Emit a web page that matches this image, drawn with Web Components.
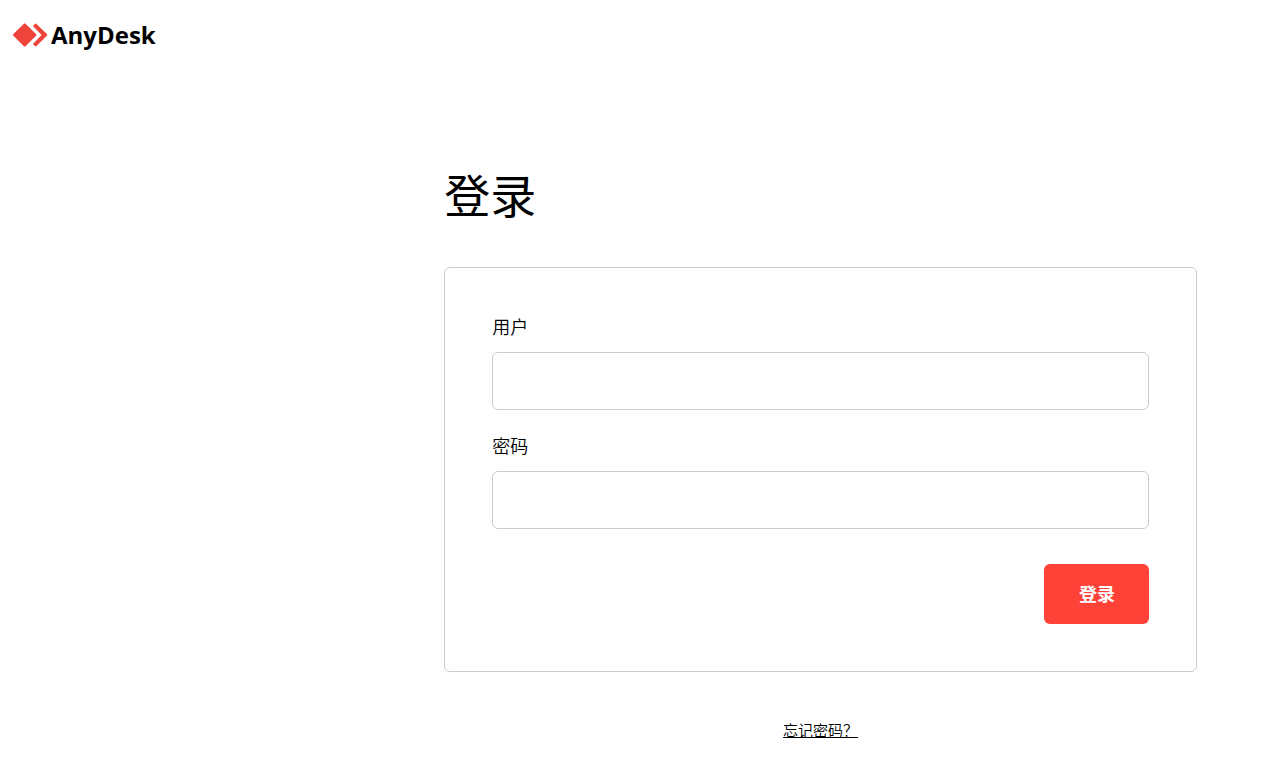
<!DOCTYPE html>
<html lang="zh-CN">
<head>
<meta charset="utf-8">
<meta name="viewport" content="width=device-width, initial-scale=1">
<title>AnyDesk</title>
<style>
  body {
    margin: 0;
    background: #fff;
    color: #000;
    font-family: "Noto Sans CJK SC", "Open Sans", sans-serif;
  }
</style>
</head>
<body>
<login-page>
  <brand-logo slot="header">AnyDesk</brand-logo>
  <login-form heading="登录"></login-form>
</login-page>

<script>
class BaseElement extends HTMLElement {
  connectedCallback() {
    if (this.shadowRoot) return;
    this.attachShadow({ mode: "open" }).innerHTML = this.render();
  }
}

class LoginPage extends BaseElement {
  render() {
    return `
      <style>
        :host { display: block; }
        header { padding: 16px 12px; }
        main {
          display: grid;
          grid-template-columns: 8fr 17fr;
          padding: 90px 90px 24px;
        }
        .content { grid-column: 2; min-width: 0; }
        @media (max-width: 800px) {
          main { grid-template-columns: 1fr; padding: 48px 24px; }
          .content { grid-column: 1; }
        }
      </style>
      <header><slot name="header"></slot></header>
      <main><div class="content"><slot></slot></div></main>`;
  }
}

class BrandLogo extends BaseElement {
  render() {
    return `
      <style>
        :host {
          display: flex;
          align-items: center;
          gap: 3px;
          font: 700 24px/38px "Open Sans", sans-serif;
        }
        svg { display: block; width: 36px; height: 24px; fill: #ef443b; }
      </style>
      <svg viewBox="0 0 36 24" aria-hidden="true">
        <path d="M11.9.7q.8-.8 1.6 0L24 11.1q.8.8 0 1.6L13.5 23.2q-.8.8-1.6 0L1.4 12.7q-.8-.8 0-1.6Z"/>
        <path d="M22.9.9q.8-.8 1.6 0L34.9 11.1q.8.8 0 1.6L24.5 23.1q-.8.8-1.6 0l-2-2L29.6 12 20.9 2.9Z"/>
      </svg>
      <span><slot></slot></span>`;
  }
}

class TextField extends BaseElement {
  render() {
    const type = this.getAttribute("type") || "text";
    return `
      <style>
        :host { display: flex; flex-direction: column; gap: 15px; }
        label { font-size: 18px; line-height: 22px; font-weight: 350; }
        input {
          box-sizing: border-box;
          width: 100%;
          height: 58px;
          padding: 0 16px;
          border: 1px solid #ccc;
          border-radius: 6px;
          background: #fff;
          color: inherit;
          font: inherit;
          font-size: 18px;
        }
      </style>
      <label for="field">${this.getAttribute("label")}</label>
      <input id="field" type="${type}" autocomplete="off">`;
  }
}

class PrimaryButton extends BaseElement {
  render() {
    return `
      <style>
        :host { display: block; }
        button {
          display: block;
          height: 60px;
          padding: 0 34px 2px 35px;
          border: 0;
          border-radius: 6px;
          background: #ff4238;
          color: #fff;
          font: inherit;
          font-size: 18px;
          font-weight: 700;
          cursor: pointer;
        }
      </style>
      <button type="button"><slot></slot></button>`;
  }
}

class LoginForm extends BaseElement {
  render() {
    return `
      <style>
        :host { display: block; }
        h1 { margin: 0 0 41px; font-size: 46px; line-height: 66px; font-weight: 400; }
        form {
          display: flex;
          flex-direction: column;
          gap: 24px;
          padding: 47px;
          border: 1px solid #ccc;
          border-radius: 6px;
        }
        primary-button { align-self: flex-end; margin-top: 11px; }
        p { margin: 47px 0 0; text-align: center; font-size: 15px; line-height: 22px; font-weight: 350; }
        a { color: inherit; }
      </style>
      <h1>${this.getAttribute("heading")}</h1>
      <form>
        <text-field label="用户"></text-field>
        <text-field label="密码" type="password"></text-field>
        <primary-button>登录</primary-button>
      </form>
      <p><a href="#">忘记密码？</a></p>`;
  }
}

customElements.define("login-page", LoginPage);
customElements.define("brand-logo", BrandLogo);
customElements.define("text-field", TextField);
customElements.define("primary-button", PrimaryButton);
customElements.define("login-form", LoginForm);
</script>
</body>
</html>
